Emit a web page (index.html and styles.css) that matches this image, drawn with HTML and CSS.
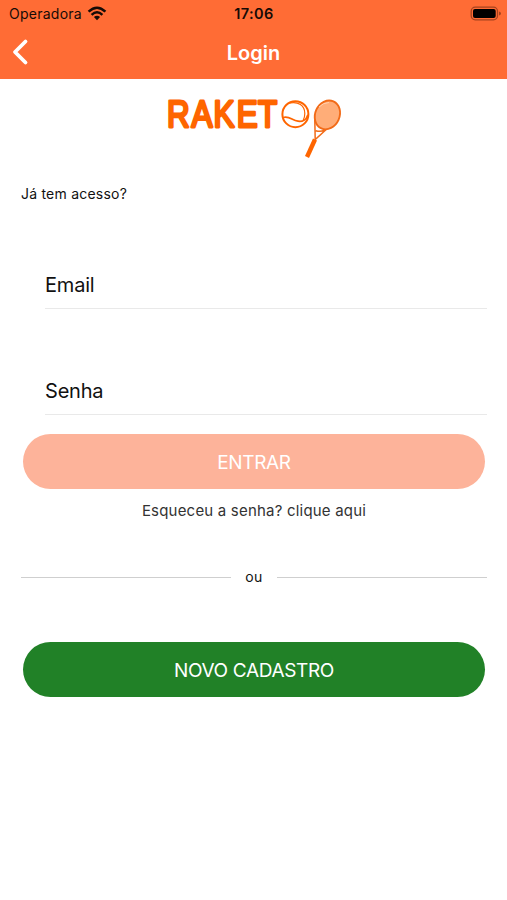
FILE: index.html
```
<!DOCTYPE html>
<html lang="pt-BR">
<head>
<meta charset="utf-8">
<title>Login</title>
<link rel="stylesheet" href="styles.css">
</head>
<body>
<header class="header">
  <div class="status">
    <div class="carrier"><span class="carrier-name">Operadora</span>
      <svg class="wifi" width="20" height="16" viewBox="0 0 20 16">
        <g fill="none" stroke="#160b06" stroke-width="2.5">
          <path d="M1.6 5.7Q10 -2.3 18.4 5.7"/>
          <path d="M4.6 8.8Q10 3.8 15.4 8.8"/>
        </g>
        <path d="M6.9 11.1Q10 8.3 13.1 11.1L10 14.2Z" fill="#160b06"/>
      </svg>
    </div>
    <span class="time">17:06</span>
    <svg class="battery" width="32" height="16" viewBox="0 0 32 16">
      <rect x="1.2" y="1.2" width="26.3" height="12.6" rx="4" fill="none" stroke="#a5431f" stroke-width="1.3"/>
      <rect x="3" y="3" width="22.7" height="9" rx="2" fill="#000"/>
      <path d="M29 5.5Q31 6.1 31 7.5T29 9.5Z" fill="#a5431f"/>
    </svg>
  </div>
  <div class="navbar">
    <svg class="back" width="18" height="28" viewBox="0 0 18 28"><path d="M14.5 3.5L4 14L14.5 24.5" fill="none" stroke="#fff" stroke-width="3.8" stroke-linecap="round" stroke-linejoin="round"/></svg>
    <h1 class="title">Login</h1>
    <span></span>
  </div>
</header>
<main class="content">
  <svg class="logo" width="200" height="76" viewBox="155 85 200 76">
    <text class="brand" transform="scale(.86 1)" x="194.2 222.6 248.4 275.2 300.1" y="127.3">RAKET</text>
    <g fill="none" stroke="#fe6500" stroke-linecap="round">
      <circle cx="295.4" cy="114.2" r="13" stroke-width="2"/>
      <path d="M283.3 117.5C289 115.6 292 120.2 298 121.2C303 122 306.5 119 307.6 115.5" stroke-width="1.8"/>
      <path d="M290 103C298 101.3 304.8 105.5 304.8 113.5Q304.8 117 303.3 120" stroke-width="1.2"/>
    </g>
    <g fill="none" stroke="#f26b18">
      <ellipse cx="327.4" cy="114.9" rx="12.2" ry="14.8" transform="rotate(24 327.4 114.9)" fill="#ffad78" stroke-width="1.9"/>
      <path d="M319 107Q323 102.8 329 102.5" stroke="#ffd0ae" stroke-width="1"/>
      <path d="M314.8 119.5L315.2 139.5L326.5 129.2M315.8 130.7Q320.5 132 324.3 130.3" stroke-width="1.5"/>
      <path d="M315 139.5L307 157" stroke="#fe6500" stroke-width="4.4"/>
    </g>
  </svg>
  <p class="intro"><span>Já tem acesso?</span></p>
  <div class="field email"><span>Email</span></div>
  <div class="field password"><span>Senha</span></div>
  <button class="button login"><span>ENTRAR</span></button>
  <a class="forgot"><span>Esqueceu a senha? clique aqui</span></a>
  <div class="divider"><span class="or">ou</span></div>
  <button class="button signup"><span>NOVO CADASTRO</span></button>
</main>
</body>
</html>
```
FILE: styles.css
```
* { box-sizing: border-box; }
body {
  margin: 0;
  min-height: 900px;
  background: #fff;
  color: #111;
  font-family: Inter, "Liberation Sans", sans-serif;
}
svg { display: block; flex: none; }
.header { height: 79px; background: #ff6c35; }
.status {
  display: grid;
  grid-template-columns: 1fr auto 1fr;
  align-items: center;
  height: 27px;
  padding: 0 5px 0 9px;
  color: #160b06;
  font-size: 14px;
}
.carrier { display: flex; align-items: center; gap: 5px; }
.carrier-name { letter-spacing: 0.25px; }
.time { margin-right: 3px; font-weight: 600; font-size: 14.5px; letter-spacing: 0.4px; }
.battery { justify-self: end; }
.navbar {
  display: grid;
  grid-template-columns: 1fr auto 1fr;
  align-items: center;
  height: 50px;
  padding: 0 11px;
}
.title { margin: 0; padding-top: 1px; color: #fff; font-size: 20px; font-weight: 600; line-height: 28px; }
.content { display: flex; flex-direction: column; padding: 6px 20px 0 21px; }
.logo { margin-left: 134px; }
.brand {
  font-family: "Liberation Sans", sans-serif;
  font-size: 36.5px;
  fill: #fe6500;
  stroke: #fe6500;
  stroke-width: 2.8;
  stroke-linejoin: round;
}
.intro { margin: 23px 0 0; font-size: 14px; line-height: 20px; letter-spacing: 0.22px; }
.field {
  display: flex;
  align-items: center;
  height: 50px;
  margin-left: 24px;
  border-bottom: 1px solid #e9e9e9;
  font-size: 20px;
  letter-spacing: -0.2px;
}
.email { margin-top: 55px; padding-top: 2px; }
.password { margin-top: 56px; padding-top: 2px; }
.button {
  height: 55px;
  margin: 19px 2px 0;
  padding: 1px 0 0;
  border: 0;
  border-radius: 28px;
  color: #fff;
  font: 400 19px Inter, "Liberation Sans", sans-serif;
  letter-spacing: -0.35px;
}
.login { background: #fdb39a; }
.forgot { margin-top: 12px; color: #333; font-size: 15px; line-height: 20px; letter-spacing: 0.2px; text-align: center; }
.divider { display: flex; align-items: center; gap: 14px; height: 20px; margin-top: 46px; font-size: 14px; }
.divider::before, .divider::after { content: ""; flex: 1; height: 1px; background: #cfcfcf; }
.or { padding-bottom: 2px; letter-spacing: 0.4px; }
.signup { margin-top: 55px; background: #218127; }
```
